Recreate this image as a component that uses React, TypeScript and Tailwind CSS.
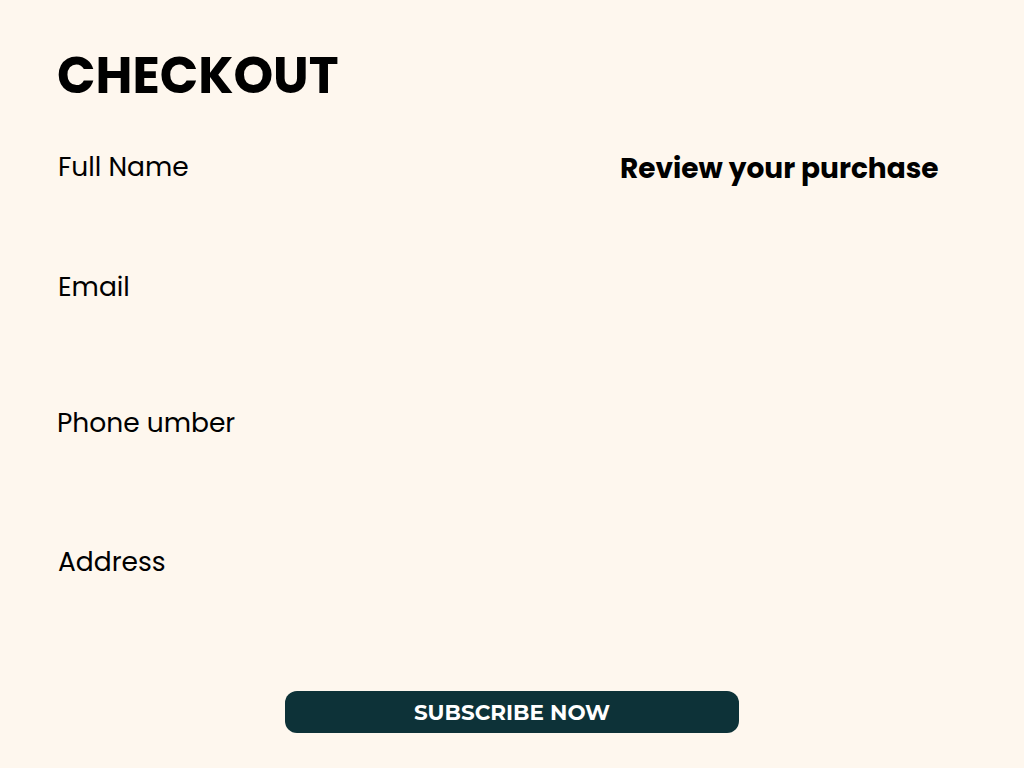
import React from 'react';

const fields = [
  { label: 'Full Name', className: 'ml-[58px] mt-[43px]' },
  { label: 'Email', className: 'ml-[58px] mt-[84px]' },
  { label: 'Phone umber', className: 'ml-[57px] mt-[100px]' },
  { label: 'Address', className: 'ml-[58px] mt-[103px]' },
];

export default function App() {
  return (
    <div className="min-h-[768px] w-full bg-[#fef7ee] text-black font-['Poppins','Open_Sans',sans-serif]">
      <div className="flex flex-col h-[768px]">
        {/* Header */}
        <h1 className="ml-[57px] pt-[46px] text-[50.5px] leading-[60px] font-bold">
          CHECKOUT
        </h1>

        <div className="flex">
          {/* Form labels */}
          <div className="w-[620px] flex flex-col">
            {fields.map((f) => (
              <label key={f.label} className={`${f.className} text-[26.5px] leading-[36px] font-normal`}>
                {f.label}
              </label>
            ))}
          </div>

          {/* Summary */}
          <div className="flex-1">
            <h2 className="mt-[45px] text-[28px] leading-[36px] font-bold">
              Review your purchase
            </h2>
          </div>
        </div>

        {/* Submit */}
        <div className="mt-auto mb-[35px] flex justify-center">
          <button className="w-[454px] h-[42px] rounded-[12px] bg-[#0d3238] text-white text-[21.5px] font-bold font-['Montserrat','Open_Sans',sans-serif]">
            SUBSCRIBE NOW
          </button>
        </div>
      </div>
    </div>
  );
}
